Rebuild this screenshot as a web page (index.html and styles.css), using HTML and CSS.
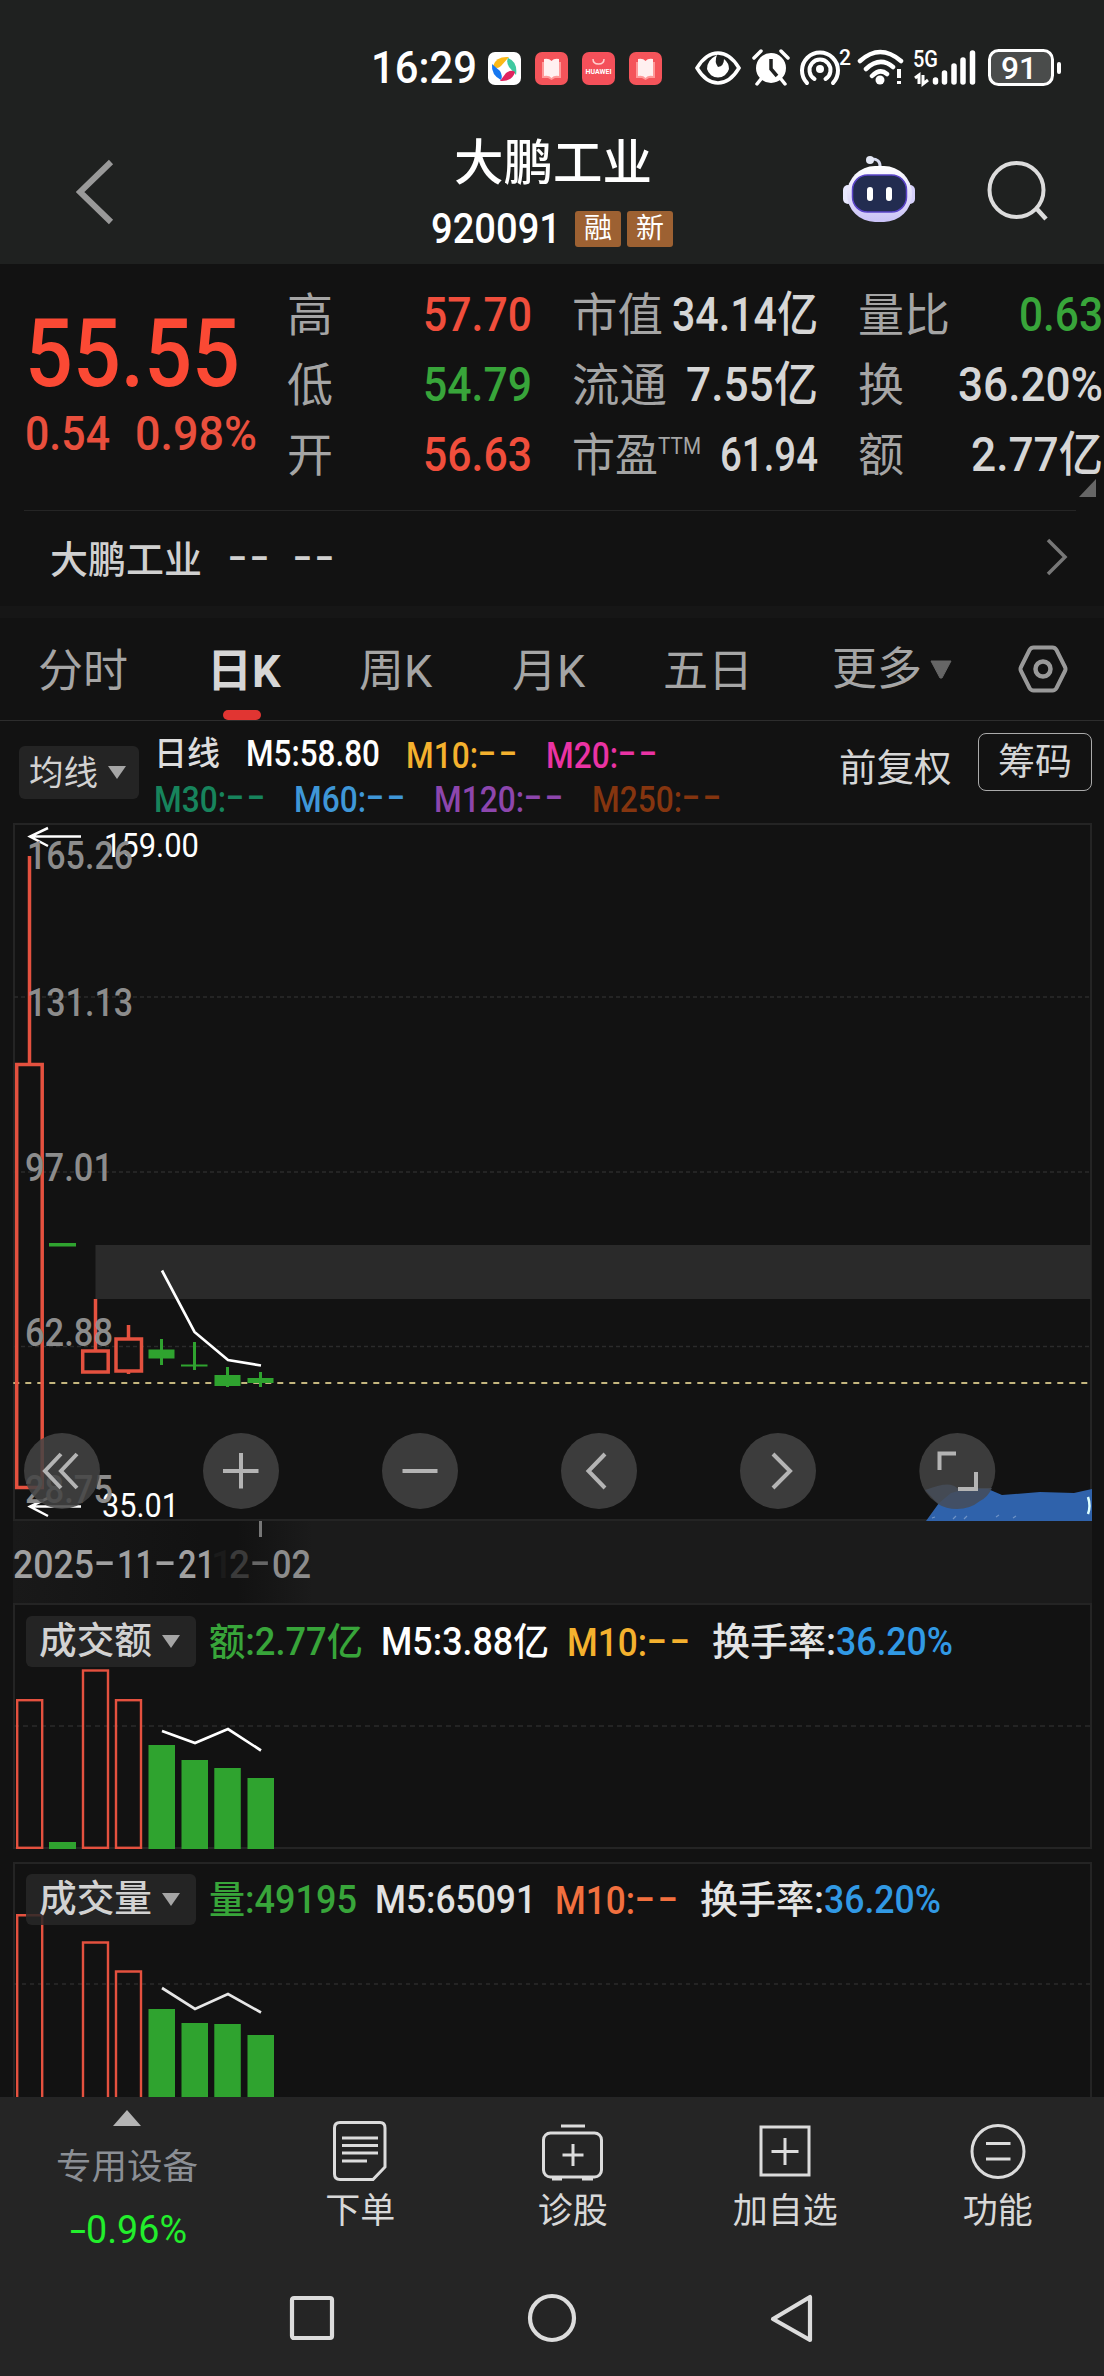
FILE: index.html
```html
<!DOCTYPE html>
<html lang="zh-CN">
<head>
<meta charset="utf-8">
<title>大鹏工业 920091</title>
<link rel="stylesheet" href="styles.css">
</head>
<body>
<div class="app">
  <header class="top">
    <div class="status">
      <span class="clock fit" data-w="106">16:29</span>
      <svg class="app-icon" viewBox="0 0 33 33"><rect width="33" height="33" rx="7" fill="#fff"/><path d="M5 14Q8 4 21 5L13 14Q9 18 5 14Z" fill="#fbb917"/><path d="M20 6Q30 10 28 23L21 15Q18 10 20 6Z" fill="#3fc9a0"/><path d="M27 20Q24 30 12 29L18 21Q23 17 27 20Z" fill="#e0245e"/><path d="M13 28Q3 23 4 12L12 19Q15 24 13 28Z" fill="#1677f0"/></svg>
      <svg class="app-icon" viewBox="0 0 33 33"><rect width="33" height="33" rx="7" fill="#f4545a"/><path d="M7 10H26V26H20L16.500 28L13 26H7Z" fill="#f99"/><path d="M9 7Q14 6 16.500 9Q19 6 24 7V24Q19 23 16.500 26Q14 23 9 24Z" fill="#fff0f0"/></svg>
      <svg class="app-icon" viewBox="0 0 33 33"><rect width="33" height="33" rx="7" fill="#f4505a"/><path d="M11 7Q11 12 16.500 12Q22 12 22 7" fill="none" stroke="#ffd0d0" stroke-width="1.500"/><text x="3.500" y="21.500" class="hw" textLength="26" lengthAdjust="spacingAndGlyphs">HUAWEI</text></svg>
      <svg class="app-icon" viewBox="0 0 33 33"><rect width="33" height="33" rx="7" fill="#f4545a"/><path d="M7 10H26V26H20L16.500 28L13 26H7Z" fill="#f99"/><path d="M9 7Q14 6 16.500 9Q19 6 24 7V24Q19 23 16.500 26Q14 23 9 24Z" fill="#fff0f0"/></svg>
      <svg class="sys" width="368" height="40" viewBox="694 48 368 40">
        <path d="M696 68Q705 53 717 53T738 68Q729 83 717 83T696 68Z" fill="none" stroke="#fff" stroke-width="3.500"/><path d="M716 55Q706 60 706 69A11.500 12 0 0 0 728 69Q728 63 723 59Q723 66 717 67Q713 62 716 55Z" fill="#fff"/>
        <circle cx="770" cy="68" r="15" fill="#fff"/><path d="M753 58L760 51M780 51L787 58M760 79L756 84M780 79L784 84" stroke="#fff" stroke-width="3.500" stroke-linecap="round"/><path d="M770 59V69L776 76" fill="none" stroke="#1f2120" stroke-width="3.500"/>
        <circle cx="819" cy="69" r="4" fill="#fff"/><path d="M813.500 79A10.500 10.500 0 1 1 824.500 79M806 83A18 18 0 1 1 832 83" fill="none" stroke="#fff" stroke-width="4" stroke-linecap="round"/>
        <text x="838" y="65" class="st" font-size="22" textLength="12" lengthAdjust="spacingAndGlyphs">2</text>
        <path d="M859 61Q879 43 900 61M865 69Q879 56 892 67M871 76Q879 68 886 74" fill="none" stroke="#fff" stroke-width="4.500" stroke-linecap="round"/><circle cx="879" cy="80" r="4.500" fill="#fff"/><path d="M898 69V78M898 81V84" stroke="#fff" stroke-width="4"/>
        <text x="912" y="67" class="st" font-size="24" textLength="25" lengthAdjust="spacingAndGlyphs">5G</text>
        <path d="M914 78L918 75V84M922 75V84L927 80" fill="none" stroke="#fff" stroke-width="3"/>
        <path d="M934.500 80V82M943.500 73V82M953 66V82M962 60V82M971.500 53V82" stroke="#fff" stroke-width="5.500" stroke-linecap="round"/>
        <rect x="988.500" y="50.500" width="63" height="34" rx="9" fill="#4a4c4b" stroke="#fff" stroke-width="3"/><path d="M1058 64V72" stroke="#fff" stroke-width="4" stroke-linecap="round"/>
        <text x="1000" y="79" class="st" font-size="32" textLength="36" lengthAdjust="spacingAndGlyphs">91</text>
      </svg>
    </div>
    <div class="titlebar">
      <svg class="back" width="40" height="68" viewBox="76 158 40 68"><path d="M111 162L80 192L111 222" fill="none" stroke="#999" stroke-width="6"/></svg>
      <div class="name">
        <h1><span class="fit" data-w="198">大鹏工业</span></h1>
        <div class="code"><span class="fit" data-w="130">920091</span><span class="tag">融</span><span class="tag">新</span></div>
      </div>
      <svg class="robot" width="74" height="70" viewBox="843 154 74 70">
        <defs><linearGradient id="shell" x1="0" y1="0" x2="0" y2="1"><stop offset="0" stop-color="#fff"/><stop offset="1" stop-color="#c9c2f7"/></linearGradient></defs>
        <path d="M871 159Q882 158 881 168" fill="none" stroke="#d8dcf0" stroke-width="3"/><circle cx="871" cy="160" r="4" fill="#e4e8f5"/>
        <rect x="844" y="185" width="10" height="19" rx="5" fill="#e8e8ff"/><rect x="906" y="185" width="10" height="19" rx="5" fill="#d5d0fa"/>
        <rect x="848" y="166" width="65" height="56" rx="28" fill="url(#shell)"/>
        <rect x="853.500" y="175" width="54" height="37" rx="15" fill="#222c50" stroke="#5a44c8" stroke-width="1.500"/>
        <path d="M871 190V198M890 190V198" stroke="#fff" stroke-width="6" stroke-linecap="round"/>
      </svg>
      <svg class="search" width="62" height="64" viewBox="986 160 62 64"><circle cx="1016.500" cy="190" r="27" fill="none" stroke="#dcdcdc" stroke-width="4"/><path d="M1036 208L1046 219" stroke="#dcdcdc" stroke-width="4.500"/></svg>
    </div>
  </header>

  <section class="quote">
    <div class="last">
      <div class="price"><span class="fit" data-w="215">55.55</span></div>
      <div class="chg"><span class="fit" data-w="85">0.54</span><span class="fit" data-w="122">0.98%</span></div>
    </div>
    <div class="stats">
      <div class="cell"><span class="k">高</span><span class="v up fit" data-w="109">57.70</span></div>
      <div class="cell"><span class="k fit" data-w="91">市值</span><span class="v fit" data-w="146">34.14亿</span></div>
      <div class="cell"><span class="k">量比</span><span class="v down fit" data-w="84">0.63</span></div>
      <div class="cell"><span class="k">低</span><span class="v down fit" data-w="109">54.79</span></div>
      <div class="cell"><span class="k fit" data-w="95">流通</span><span class="v fit" data-w="132">7.55亿</span></div>
      <div class="cell"><span class="k">换</span><span class="v fit" data-w="145">36.20%</span></div>
      <div class="cell"><span class="k">开</span><span class="v up fit" data-w="109">56.63</span></div>
      <div class="cell"><span class="k"><span class="fit" data-w="86">市盈</span><sup class="fit" data-w="43">TTM</sup></span><span class="v fit" data-w="98">61.94</span></div>
      <div class="cell"><span class="k">额</span><span class="v fit" data-w="132">2.77亿</span></div>
    </div>
    <svg class="corner" width="17" height="18" viewBox="0 0 17 18"><path d="M17 0V18H0Z" fill="#666"/></svg>
  </section>

  <section class="related">
    <span class="fit" data-w="152">大鹏工业</span><span class="dashes fit" data-w="44">--</span><span class="dashes fit" data-w="44">--</span>
    <svg width="24" height="40" viewBox="0 0 24 40"><path d="M3 3L20 20L3 37" fill="none" stroke="#777" stroke-width="3.500"/></svg>
  </section>

  <nav class="tabs">
    <span class="tab">分时</span><span class="tab on">日K</span><span class="tab">周K</span><span class="tab">月K</span><span class="tab">五日</span>
    <span class="tab more">更多<svg width="22" height="19" viewBox="0 0 22 19"><path d="M1 1H21L12 18H10Z" fill="#666" stroke="#666" stroke-linejoin="round"/></svg></span>
    <svg class="gear" width="50" height="48" viewBox="0 0 50 48"><path d="M15.500 2.500H34.500Q37 2.500 38.500 5L47 22Q48 24 47 26L38.500 43Q37 45.500 34.500 45.500H15.500Q13 45.500 11.500 43L3 26Q2 24 3 22L11.500 5Q13 2.500 15.500 2.500Z" fill="none" stroke="#999" stroke-width="4"/><circle cx="25" cy="24" r="7.500" fill="none" stroke="#999" stroke-width="4.500"/></svg>
  </nav>

  <section class="ma">
    <div class="pick pick-ma"><span class="fit" data-w="69">均线</span><i class="caret"></i></div>
    <div class="legend">
      <div class="line"><span class="m day">日线</span><span class="m c5"><span class="fit" data-w="134">M5:58.80</span></span><span class="m c10"><span class="fit" data-w="72">M10:</span><span class="dash fit" data-w="42">--</span></span><span class="m c20"><span class="fit" data-w="72">M20:</span><span class="dash fit" data-w="42">--</span></span></div>
      <div class="line"><span class="m c30"><span class="fit" data-w="72">M30:</span><span class="dash fit" data-w="42">--</span></span><span class="m c60"><span class="fit" data-w="72">M60:</span><span class="dash fit" data-w="42">--</span></span><span class="m c120"><span class="fit" data-w="90">M120:</span><span class="dash fit" data-w="42">--</span></span><span class="m c250"><span class="fit" data-w="90">M250:</span><span class="dash fit" data-w="42">--</span></span></div>
    </div>
    <span class="adj">前复权</span>
    <span class="chips">筹码</span>
  </section>

  <section class="kline">
    <svg class="plot" width="1104" height="698" viewBox="0 823 1104 698">
      <rect x="14" y="824" width="1077" height="696" fill="none" stroke="#242424" stroke-width="2"/>
      <path d="M14 997H1090M14 1172H1090M14 1346.500H1090" stroke="#2b2b2b" stroke-width="1.500" stroke-dasharray="4 3"/>
      <rect x="95.500" y="1245" width="995.500" height="54" fill="#2a2a2a"/>
      <path d="M13.300 1383H1090" stroke="#c4b67e" stroke-width="2" stroke-dasharray="6 6"/>
      <g fill="none" stroke="#e4513f" stroke-width="3.500">
        <path d="M29.500 856V1063M95.500 1299V1350M128.500 1325V1338M128.500 1371V1374"/>
        <rect x="16.700" y="1064.500" width="25.500" height="423"/><rect x="82.700" y="1351" width="25.500" height="21"/><rect x="116" y="1339" width="25.500" height="32"/>
      </g>
      <g fill="#2fa32f">
        <path d="M49 1243h27v3.500H49zM148.500 1349.500h26v9h-26zM160 1339h3v26h-3zM181 1364.500h26.500v2H181zM193 1342h3v28h-3zM214.500 1375h26v11h-26zM226 1367h3v20h-3zM247.500 1378h26v5h-26zM259 1372h3v15h-3z"/>
      </g>
      <path d="M162 1270.500L194.500 1332L228 1360L261 1365.500" fill="none" stroke="#fff" stroke-width="2.700"/>
      <path d="M30 836.500H81M48 828L30 836.500L48 846M30 1506.500H81M48 1498L30 1506.500L48 1516" fill="none" stroke="#fff" stroke-width="2.500"/>
      <g class="ext"><text x="104" y="856.500" textLength="95" lengthAdjust="spacingAndGlyphs">159.00</text><text x="102" y="1516.500" textLength="77" lengthAdjust="spacingAndGlyphs">35.01</text></g>
      <g class="axis"><text x="27" y="869" textLength="106" lengthAdjust="spacingAndGlyphs">165.26</text><text x="27" y="1016" textLength="106" lengthAdjust="spacingAndGlyphs">131.13</text><text x="25" y="1181" textLength="88" lengthAdjust="spacingAndGlyphs">97.01</text><text x="25" y="1346" textLength="88" lengthAdjust="spacingAndGlyphs">62.88</text><text x="25" y="1503" textLength="88" lengthAdjust="spacingAndGlyphs">28.75</text></g>
      <g fill="#444" fill-opacity=".86"><circle cx="62" cy="1471" r="38"/><circle cx="241" cy="1471" r="38"/><circle cx="420" cy="1471" r="38"/><circle cx="599" cy="1471" r="38"/><circle cx="778" cy="1471" r="38"/><circle cx="957.300" cy="1471" r="38"/></g>
      <path d="M926 1521L939 1503L951 1493L966 1489L988 1489L1002 1495L1040 1492L1074 1493L1092 1489V1521Z" fill="#2f62ab"/>
      <path d="M925 1490Q950 1480 957 1488H992Q988 1497 980 1501Q970 1509 957 1509Q946 1509 938 1504Z" fill="#454c58" opacity=".85"/>
      <path d="M1088 1497Q1091 1506 1088 1514" fill="none" stroke="#dff" stroke-width="2.500"/>
      <path d="M932 1518l3-1M953 1519l3-3M964 1519l3-3M996 1517l3-2M1013 1518l3-2" stroke="#6f93c6" stroke-width="1.200"/>
      <g fill="none" stroke="#b4b4b4" stroke-width="4">
        <path d="M61 1454L45 1471L61 1488M77 1454L61 1471L77 1488M223 1471H258.500M241 1453V1488.500M402.500 1471H437.500M605 1454L588.500 1471L605 1488M773 1454L790 1471L773 1488M939.500 1470V1453.500H956M976 1472V1489H958"/>
      </g>
    </svg>
  </section>

  <section class="dates">
    <div class="d1"><span class="fit" data-w="81">2025</span><span class="fit dash" data-w="23">-</span><span class="fit" data-w="37">11</span><span class="fit dash" data-w="24">-</span><span class="fit" data-w="37">21</span></div>
    <div class="d2"><span class="g1">1</span><span class="fit g2" data-w="21">2</span><span class="fit dash g3" data-w="22">-</span><span class="fit" data-w="39">02</span></div>
    <i class="tick"></i>
  </section>

  <section class="panel">
    <svg class="plot" width="1104" height="246" viewBox="0 1603 1104 246">
      <path d="M14 1604H1091V1848H14Z" fill="none" stroke="#242424" stroke-width="2"/>
      <path d="M14 1726H1090" stroke="#2b2b2b" stroke-width="1.500" stroke-dasharray="5 4"/>
      <g fill="none" stroke="#e4513f" stroke-width="2.400"><rect x="17.200" y="1700.200" width="25" height="147.600"/><rect x="83" y="1670.500" width="25" height="177.300"/><rect x="116" y="1700.200" width="25" height="147.600"/></g>
      <path d="M49 1842h27v7H49zM148.500 1745h26.500v104h-26.500zM181.500 1760h26.500v89h-26.500zM214.300 1768h26.500v81h-26.500zM247.500 1778h26.500v71h-26.500z" fill="#2fa32f"/>
      <path d="M162 1731L195 1743L228 1729L261 1750.500" fill="none" stroke="#fff" stroke-width="2.700"/>
    </svg>
    <div class="head">
      <div class="pick"><span class="fit" data-w="113">成交额</span><i class="caret"></i></div>
      <span class="green fit" data-w="154">额:2.77亿</span>
      <span class="p5 fit" data-w="168">M5:3.88亿</span>
      <span class="c10 grp"><span class="fit" data-w="80">M10:</span><span class="dash fit" data-w="46">--</span></span>
      <span class="turn"><span class="fit" data-w="124">换手率:</span><b class="fit" data-w="117">36.20%</b></span>
    </div>
  </section>

  <section class="panel vol">
    <svg class="plot" width="1104" height="235" viewBox="0 1862 1104 235">
      <path d="M14 2099V1863H1091V2099" fill="none" stroke="#242424" stroke-width="2"/>
      <path d="M14 1984H1090" stroke="#2b2b2b" stroke-width="1.500" stroke-dasharray="4 4"/>
      <g fill="none" stroke="#e4513f" stroke-width="2.400"><path d="M17.200 2099V1915.200H42.200V2099M83 2099V1942.500H108V2099M116 2099V1971.500H141V2099"/></g>
      <path d="M148.500 2009h26.500v90h-26.500zM181.500 2023h26.500v76h-26.500zM214.300 2024h26.500v76h-26.500zM247.500 2035h26.500v66h-26.500z" fill="#2fa32f"/>
      <path d="M162 1988L195 2009L228 1994L261 2012.500" fill="none" stroke="#e6e6e6" stroke-width="2.700"/>
    </svg>
    <div class="head">
      <div class="pick"><span class="fit" data-w="113">成交量</span><i class="caret"></i></div>
      <span class="green fit" data-w="148">量:49195</span>
      <span class="p5 fit" data-w="161">M5:65091</span>
      <span class="orange grp"><span class="fit" data-w="80">M10:</span><span class="dash fit" data-w="46">--</span></span>
      <span class="turn"><span class="fit" data-w="124">换手率:</span><b class="fit" data-w="117">36.20%</b></span>
    </div>
  </section>

  <footer class="bottom">
    <div class="actions">
      <div class="sector"><svg width="28" height="16" viewBox="0 0 28 16"><path d="M14 0L28 16H0Z" fill="#b4b4b4"/></svg><span class="sname">专用设备</span><span class="pct"><span class="fit" data-w="16">-</span><span class="fit" data-w="101">0.96%</span></span></div>
      <div class="act"><svg width="64" height="60" viewBox="0 0 64 60"><path d="M12 1.500H52Q57 1.500 57 7V46L45 58.500H12Q6.500 58.500 6.500 53V7Q6.500 1.500 12 1.500Z"/><path d="M14 17H50M14 24.500H50M14 32H50M14 40H39"/></svg><span>下单</span></div>
      <div class="act"><svg width="64" height="60" viewBox="0 0 64 60"><rect x="2.500" y="12" width="58" height="44" rx="7"/><path d="M20 5H44M32 23V45M21.500 34H42.500M11 58H21M41 58H52"/></svg><span>诊股</span></div>
      <div class="act"><svg width="64" height="60" viewBox="0 0 64 60"><rect x="8" y="6" width="48" height="48"/><path d="M32 17V44M18.500 30.500H45.500"/></svg><span>加自选</span></div>
      <div class="act"><svg width="64" height="60" viewBox="0 0 64 60"><circle cx="32" cy="30.500" r="26"/><path d="M20 22.500H44.500M20 38H44.500"/></svg><span>功能</span></div>
    </div>
    <div class="sysnav">
      <svg width="50" height="50" viewBox="0 0 50 50"><rect x="5" y="5" width="40" height="40" rx="2"/></svg>
      <svg width="50" height="50" viewBox="0 0 50 50"><circle cx="25" cy="25" r="22"/></svg>
      <svg width="50" height="50" viewBox="0 0 50 50"><path d="M6 26L43 4V47Z" stroke-linejoin="round"/></svg>
    </div>
  </footer>
</div>
<script src="fit.js"></script>
</body>
</html>
```
FILE: fit.js
```js
// Condense or widen each figure to its column width, keeping the flow box in step.
var items = Array.prototype.slice.call(document.querySelectorAll('.fit'));
var sizes = items.map(function (el) { return el.getBoundingClientRect().width; });
items.forEach(function (el, i) {
  var w = parseFloat(el.dataset.w);
  el.style.transform = 'scaleX(' + (w / sizes[i]).toFixed(4) + ')';
  el.style.marginRight = (w - sizes[i]).toFixed(2) + 'px';
});
```
FILE: styles.css
```css
* { box-sizing: border-box; }
body { margin: 0; background: #121212; font-family: Roboto, "Noto Sans CJK SC", sans-serif; color: #d6d6d6; }
svg { display: block; flex: none; }
.app { width: 1104px; height: 2376px; overflow: hidden; display: flex; flex-direction: column; }
.fit { display: inline-block; flex: none; white-space: nowrap; transform-origin: 0 50%; }

.top { height: 264px; flex: none; background: #1f2120; }
.status { height: 90px; padding: 46px 0 0 371px; display: flex; align-items: center; color: #fff; }
.clock { font-size: 45px; line-height: 46px; font-weight: 500; }
.app-icon { width: 33px; height: 33px; margin-left: 14px; }
.clock + .app-icon { margin-left: 11px; }
.sys { margin-left: 33px; }
.hw { font: 700 8px Roboto, sans-serif; fill: #fff; }
.st { font-family: Roboto, sans-serif; font-weight: 500; fill: #fff; }
.titlebar { height: 174px; display: flex; padding: 0 56px 0 76px; }
.back { margin-top: 68px; }
.name { width: 260px; margin-left: 307px; padding-top: 42px; display: flex; flex-direction: column; align-items: center; color: #fff; }
h1 { margin: 0; font-size: 49px; line-height: 64px; font-weight: 500; }
.code { margin-top: 10px; display: flex; align-items: center; font-size: 42px; line-height: 46px; font-weight: 500; margin-left: -1px; }
.tag { width: 46px; height: 36px; margin-left: 6px; border-radius: 3px; background: #9d6132; font-size: 28px; line-height: 36px; font-weight: 400; text-align: center; }
.code .fit + .tag { margin-left: 14px; }
.robot { margin: 64px 0 0 160px; }
.search { margin: 70px 0 0 70px; }

.quote { position: relative; height: 246px; flex: none; display: flex; }
.last { width: 287px; padding-left: 25px; color: #fb4934; font-weight: 500; }
.price { margin-top: 40px; font-size: 94px; line-height: 100px; }
.chg { display: flex; gap: 25px; margin-top: 2px; font-size: 48px; line-height: 56px; color: #e94f3d; }
.stats { width: 817px; display: grid; grid-template-columns: 245px 246px 245px; grid-auto-rows: 70px; column-gap: 40px; padding-top: 16px; }
.cell { display: flex; justify-content: space-between; align-items: center; line-height: 70px; }
.k { font-size: 46px; color: #a5a5a5; font-weight: 400; white-space: nowrap; }
.v { font-size: 48px; font-weight: 500; }
.up { color: #f04e3c; }
.down { color: #38a53a; }
sup { font-size: 23px; line-height: 20px; vertical-align: 17px; }
.corner { position: absolute; left: 1079px; top: 215px; }

.related { height: 96px; flex: none; display: flex; align-items: center; margin: 0 28px 0 24px; padding: 0 7px 4px 26px; border-top: 1px solid #252525; font-size: 38px; color: #d0d0d0; font-weight: 500; }
.related .dashes { margin-left: 26px; letter-spacing: 2px; }
.related .dashes + .dashes { margin-left: 21px; }
.related svg { margin: 0 0 0 auto; }

.tabs { height: 115px; flex: none; border-top: 12px solid #161616; border-bottom: 1.500px solid #2d2d2d; display: flex; align-items: center; padding-left: 38px; font-size: 45px; color: #a5a5a5; }
.tab { position: relative; flex: none; height: 102px; line-height: 107px; width: 169px; white-space: nowrap; }
.tab:nth-child(2) { width: 152px; }
.tab:nth-child(3) { width: 153px; }
.tab:nth-child(4) { width: 151px; }
.tab:nth-child(5) { width: 169px; }
.tab.on { color: #d6d6d6; font-weight: 700; }
.tab.on::after { content: ""; position: absolute; left: 16px; bottom: 0; width: 38px; height: 10px; border-radius: 5px; background: #e13532; }
.more { display: flex; align-items: center; gap: 8px; width: auto; }
.gear { margin-left: 66px; }

.ma { height: 102px; flex: none; display: flex; padding: 0 12px 0 19px; }
.pick { display: flex; align-items: center; gap: 10px; width: 170px; height: 51px; padding-left: 13px; border-radius: 6px; background: rgba(40,40,40,.85); color: #d2d2d2; font-size: 37px; line-height: 50px; font-weight: 500; }
.pick-ma { width: 120px; height: 53px; margin-top: 25px; padding-left: 10px; font-size: 34px; font-weight: 400; }
.caret { border: 9.500px solid transparent; border-top: 13px solid #a5a5a5; border-bottom: 0; }
.legend { width: 680px; margin-left: 15px; padding-top: 11px; font-size: 37px; font-weight: 500; }
.line { display: flex; height: 44px; line-height: 44px; gap: 26px; align-items: center; }
.m { white-space: nowrap; }
.day { font-size: 33px; color: #ddd; width: 66px; }
.c5 { color: #fff; }
.c10 { color: #f4b12e; }
.c20 { color: #ea33a4; }
.c30 { color: #17845c; }
.c60 { color: #3f97d8; }
.c120 { color: #8d46ad; }
.c250 { color: #85350f; }
.dash { vertical-align: 3px; letter-spacing: 2px; }
.adj { font-size: 37.500px; line-height: 50px; margin-top: 22px; margin-left: 5px; white-space: nowrap; }
.chips { width: 114px; height: 58px; margin: 12px 0 0 auto; border: 1.500px solid #aaa; border-radius: 8px; font-size: 37px; line-height: 58px; text-align: center; }

.kline { height: 698px; flex: none; }
.axis { font: 500 38px Roboto, sans-serif; fill: #8c8c8c; }
.ext { font: 400 34px Roboto, sans-serif; fill: #fff; }

.dates { position: relative; height: 82px; flex: none; display: flex; margin: 0 12px 0 13px; padding-top: 18px; background: linear-gradient(90deg, #191919 0, #121212 190px, #121212 225px, #1b1b1b 300px); font-size: 39px; line-height: 52px; color: #a0a0a0; font-weight: 500; white-space: nowrap; }
.d1, .d2 { display: flex; }
.d2 { color: #8c8c8c; margin-left: 1px; }
.g1 { width: 13px; color: #1b1b1b; text-indent: -5px; }
.g2 { color: #3a3a3a; }
.g3 { color: #666; }
.dates .dash { margin-top: -3px; letter-spacing: 1px; }
.tick { position: absolute; left: 246px; top: 0; width: 3px; height: 16px; background: #777; }

.panel { display: grid; height: 246px; flex: none; }
.panel > * { grid-area: 1 / 1; }
.head { display: flex; align-items: center; height: 51px; margin: 13px 0 0 26px; font-size: 38px; line-height: 50px; font-weight: 500; }
.green { color: #38a53a; margin-left: 13px; }
.p5 { color: #fff; margin-left: 18px; }
.grp { margin-left: 18px; white-space: nowrap; }
.turn { margin-left: 19px; color: #e4e4e4; white-space: nowrap; }
.turn b { font-weight: 500; color: #3199e4; }
.vol { height: 235px; margin-top: 13px; overflow: hidden; }
.vol .head { margin-top: 12px; }
.vol .p5 { color: #e2e2e2; margin-left: 18px; }
.vol .grp { margin-left: 19px; }
.orange { color: #f2703f; }

.bottom { flex: 1; background: #252525; }
.actions { display: flex; height: 163px; color: #d8d8d8; }
.sector { width: 254px; display: flex; flex-direction: column; align-items: center; padding-top: 13px; }
.sname { margin-top: 15px; font-size: 35.500px; line-height: 52px; color: #8b8f95; }
.pct { margin: 11px 0 0 2px; font-size: 39px; line-height: 52px; color: #22ee2c; }
.act { width: 212.500px; display: flex; flex-direction: column; align-items: center; padding-top: 24px; font-size: 35px; line-height: 52px; }
.act span { margin-top: 5px; }
.act svg, .sysnav svg { fill: none; stroke: #dcdcdc; stroke-width: 3; }
.sysnav { display: flex; gap: 190px; padding: 33px 0 0 287px; }
.sysnav svg { stroke-width: 4.200; }
```
